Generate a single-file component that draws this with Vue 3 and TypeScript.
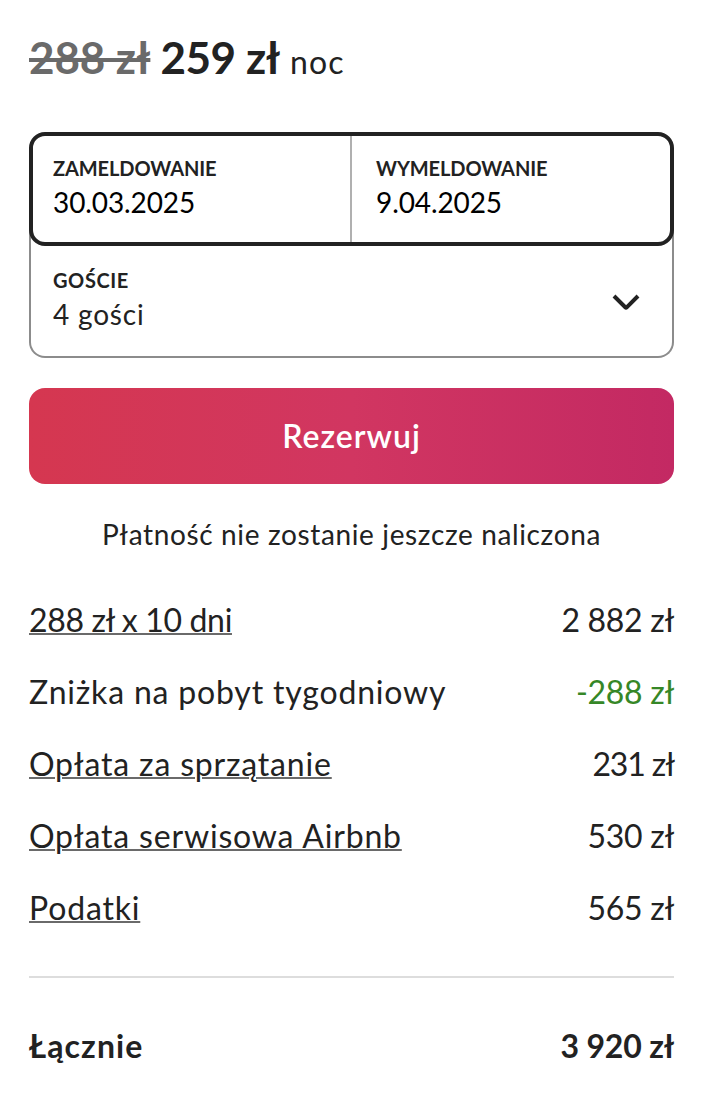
<template>
	<div class="booking">
		<!-- Cena za noc -->
		<div class="price">
			<span class="price-old">288 zł</span>
			<span class="price-now">259 zł</span>
			<span class="price-unit">noc</span>
		</div>

		<!-- Daty i goście -->
		<div class="picker">
			<div class="dates">
				<div v-for="date in dates" :key="date.label" class="date">
					<div class="label">{{ date.label }}</div>
					<div class="value">{{ date.value }}</div>
				</div>
			</div>
			<div class="guests">
				<div>
					<div class="label guests-label">GOŚCIE</div>
					<div class="value guests-value">{{ guests }} gości</div>
				</div>
				<svg class="chevron" viewBox="0 0 32 32" aria-hidden="true">
					<path d="M28 12 16.7 23.3a1 1 0 0 1-1.4 0L4 12" />
				</svg>
			</div>
		</div>

		<button class="reserve" type="button">Rezerwuj</button>
		<p class="note">Płatność nie zostanie jeszcze naliczona</p>

		<!-- Podsumowanie kosztów -->
		<div class="fees">
			<div v-for="fee in fees" :key="fee.name" class="row">
				<span class="name" :class="{ link: fee.link, numeric: fee.numeric }">{{ fee.name }}</span>
				<span class="amount" :class="{ discount: fee.discount, tight: fee.amount.includes('1') }">{{ fee.amount }}</span>
			</div>
		</div>
		<div class="row total">
			<span class="name">Łącznie</span>
			<span class="amount">3 920 zł</span>
		</div>
	</div>
</template>

<script setup lang="ts">
import { ref } from 'vue'

interface Fee {
	name: string
	amount: string
	link?: boolean
	numeric?: boolean
	discount?: boolean
}

const guests = ref(4)

const dates = [
	{ label: 'ZAMELDOWANIE', value: '30.03.2025' },
	{ label: 'WYMELDOWANIE', value: '9.04.2025' }
]

const fees: Fee[] = [
	{ name: '288 zł x 10 dni', amount: '2 882 zł', link: true, numeric: true },
	{ name: 'Zniżka na pobyt tygodniowy', amount: '-288 zł', discount: true },
	{ name: 'Opłata za sprzątanie', amount: '231 zł', link: true },
	{ name: 'Opłata serwisowa Airbnb', amount: '530 zł', link: true },
	{ name: 'Podatki', amount: '565 zł', link: true }
]
</script>

<style>
body {
	background: #fff;
}
</style>

<style scoped>
.booking {
	box-sizing: border-box;
	width: 710px;
	height: 1104px;
	padding: 31px 36px 0 29px;
	font-family: Lato, 'Noto Sans', sans-serif;
	font-size: 32px;
	line-height: 40px;
	color: #222;
}

.price {
	display: flex;
	align-items: baseline;
	gap: 10px;
	height: 52px;
	font-size: 44px;
	line-height: 52px;
	font-weight: 700;
	letter-spacing: -0.1px;
	white-space: nowrap;
}

.price-old {
	color: #6a6a6a;
	text-decoration: line-through;
	text-decoration-thickness: 4px;
}

.price-now {
	letter-spacing: -0.4px;
}

.price-unit {
	font-size: 32px;
	font-weight: 400;
	letter-spacing: 1.2px;
}

.picker {
	margin-top: 49px;
}

.dates {
	position: relative;
	z-index: 1;
	display: grid;
	grid-template-columns: 319px 1fr;
	box-sizing: border-box;
	height: 114px;
	background: #fff;
	border: 4px solid #222;
	border-radius: 16px;
}

.date {
	padding: 20px 20px 0;
}

.date + .date {
	padding-left: 24px;
}

.date:first-child {
	border-right: 2px solid #b0b0b0;
}

.label {
	font-size: 20px;
	line-height: 24px;
	font-weight: 700;
	letter-spacing: -0.1px;
}

.guests-label {
	letter-spacing: 0.6px;
}

.value {
	margin-top: 4px;
	font-size: 28px;
	line-height: 36px;
	letter-spacing: -0.1px;
	color: #000;
}

.guests-value {
	color: #222;
	letter-spacing: 0.8px;
}

.guests {
	display: flex;
	justify-content: space-between;
	align-items: flex-start;
	box-sizing: border-box;
	height: 132px;
	margin-top: -20px;
	padding: 42px 30px 0 22px;
	border: 2px solid #8c8c8c;
	border-top: none;
	border-radius: 0 0 16px 16px;
}

.chevron {
	width: 32px;
	height: 32px;
	margin-top: 16px;
	fill: none;
	stroke: #222;
	stroke-width: 4;
}

.reserve {
	display: block;
	width: 100%;
	height: 96px;
	margin-top: 30px;
	padding: 0;
	border: none;
	border-radius: 16px;
	background: linear-gradient(to right, #d53750 0%, #d13661 50%, #c32963 100%);
	color: #fff;
	font-family: inherit;
	font-size: 32px;
	line-height: 40px;
	font-weight: 600;
	letter-spacing: 1px;
	cursor: pointer;
}

.note {
	margin: 32px 0 0;
	font-size: 28px;
	line-height: 36px;
	letter-spacing: 0.64px;
	text-align: center;
}

.fees {
	display: flex;
	flex-direction: column;
	gap: 32px;
	margin-top: 48px;
	padding-bottom: 48px;
	border-bottom: 2px solid #ddd;
}

.row {
	display: flex;
	justify-content: space-between;
	white-space: nowrap;
}

.name {
	letter-spacing: 0.82px;
}

.numeric {
	letter-spacing: -0.35px;
}

.amount {
	letter-spacing: -0.3px;
}

.tight {
	letter-spacing: -1.1px;
}

.link {
	text-decoration: underline;
	text-decoration-color: #6a6a6a;
	text-decoration-thickness: 2px;
	text-underline-offset: 1px;
}

.discount {
	color: #368727;
}

.total {
	margin-top: 48px;
	font-weight: 700;
}

.total .name {
	letter-spacing: 1.1px;
}

.total .amount {
	letter-spacing: -0.2px;
}
</style>
